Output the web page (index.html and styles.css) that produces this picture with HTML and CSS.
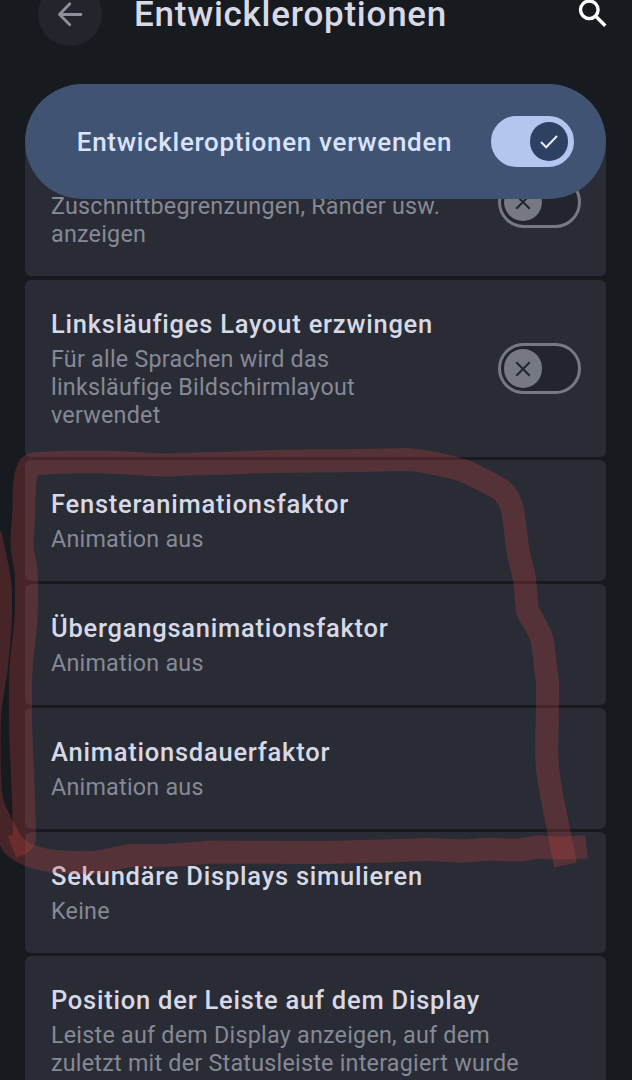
FILE: index.html
```
<!DOCTYPE html>
<html lang="de">
<head>
    <meta charset="UTF-8">
    <title>Entwickleroptionen</title>
    <meta name="viewport" content="width=device-width, initial-scale=1.0">
    <link rel="stylesheet" href="styles.css">
</head>
<body>
    <div class="screen">
        <header class="topbar">
            <button class="back" aria-label="Zurück">
                <svg width="28" height="28" viewBox="0 0 28 28">
                    <path d="M25 14.500H3.500M13.800 3.800L3.500 14.500l10.300 10.300"/>
                </svg>
            </button>
            <h1>Entwickleroptionen</h1>
            <svg class="search" width="30" height="30" viewBox="0 0 30 30">
                <circle cx="11.3" cy="10.8" r="8.8"/>
                <path d="M18 17.5l9.3 9.3"/>
            </svg>
        </header>

        <div class="main-switch">
            <span>Entwickleroptionen verwenden</span>
            <div class="toggle on">
                <div class="knob">
                    <svg width="20" height="20" viewBox="0 0 20 20"><path d="M2 10l5.2 5.2L18 4"/></svg>
                </div>
            </div>
        </div>

        <main class="list">
            <div class="card card-scrolled">
                <div class="text">
                    <p>Zuschnittbegrenzungen, Ränder usw.<br>anzeigen</p>
                </div>
                <div class="toggle">
                    <div class="knob">
                        <svg width="20" height="20" viewBox="0 0 20 20"><path d="M3.3 3.3l13.4 13.4M16.7 3.3L3.3 16.7"/></svg>
                    </div>
                </div>
            </div>
            <div class="card">
                <div class="text">
                    <h2>Linksläufiges Layout erzwingen</h2>
                    <p>Für alle Sprachen wird das<br>linksläufige Bildschirmlayout<br>verwendet</p>
                </div>
                <div class="toggle">
                    <div class="knob">
                        <svg width="20" height="20" viewBox="0 0 20 20"><path d="M3.3 3.3l13.4 13.4M16.7 3.3L3.3 16.7"/></svg>
                    </div>
                </div>
            </div>
            <div class="card">
                <div class="text">
                    <h2>Fensteranimationsfaktor</h2>
                    <p>Animation aus</p>
                </div>
            </div>
            <div class="card">
                <div class="text">
                    <h2>Übergangsanimationsfaktor</h2>
                    <p>Animation aus</p>
                </div>
            </div>
            <div class="card">
                <div class="text">
                    <h2>Animationsdauerfaktor</h2>
                    <p>Animation aus</p>
                </div>
            </div>
            <div class="card">
                <div class="text">
                    <h2>Sekundäre Displays simulieren</h2>
                    <p>Keine</p>
                </div>
            </div>
            <div class="card">
                <div class="text">
                    <h2>Position der Leiste auf dem Display</h2>
                    <p>Leiste auf dem Display anzeigen, auf dem<br>zuletzt mit der Statusleiste interagiert wurde</p>
                </div>
            </div>
        </main>

        <!-- Markierung mit dem Textmarker -->
        <svg class="marker" width="632" height="1080" viewBox="0 0 632 1080">
            <path d="M12 847C20 844 24.500 843 24.500 838C24 810 23 780 21 740C20 700 20 680 21.500 660C24 640 27 620 26.500 600V580C27 562 22 560 22 545C22 530 24 520 24 505C24 490 24 465 34 464C60 461 80 462 100 462C130 462 145 465 167 465C190 464 210 463 230 463C270 461 290 461 316 461C350 461 380 460 405 459.600C425 460 445 466 462 470C475 475 490 484 500 489C510 496 513 510 514 520C516 530 516 540 518 550C520 562 523 570 524.500 580C526 590 526 600 527.500 610C530 618 539 628 542 640C545 652 545 670 547.500 680V700C547.500 720 546.500 740 546.700 755C547 780 556 815 565.500 865"/>
            <path d="M586.500 846.700C570 848.500 553 848 538 847C530 848 525 850 516.700 850C507 850.500 500 849 490 849.300C480 849.500 473 851 463 851C450 851 440 849.500 427 849.500C415 849.500 408 850.500 400 850.500C370 851 340 852.500 316 852.500C280 852.500 250 852 213 852C195 853 180 855 165 855.500H133C115 857 105 862.500 90 862.500C70 863 60 862 50 861C35 858 20 853 13 845C5 830 -8 810 -9.500 793C-11 775 -11 765 -10.800 753C-11 735 -11 728 -10.500 713C-9 700 -6 685 -4 670C-2 650 0.500 630 0.500 615V590C-1 570 -7 550 -10 533"/>
        </svg>
    </div>
</body>
</html>
```
FILE: styles.css
```
:root {
    --bg-color: #171a1f;
    --card-color: #2a2c35;
    --banner-color: #415373;
    --title-color: #d7d9e6;
    --sub-color: #868996;
    --outline-color: #767982;
}

* {
    box-sizing: border-box;
}

body {
    margin: 0;
    background-color: var(--bg-color);
    color: var(--title-color);
    font-family: Roboto, "Liberation Sans", sans-serif;
}

.screen {
    position: relative;
    width: 632px;
    height: 1080px;
    overflow: hidden;
}

.topbar {
    display: flex;
    align-items: center;
    height: 64px;
    margin-top: -18px;
    padding: 0 24px 0 38px;
}

.back {
    display: flex;
    align-items: center;
    justify-content: center;
    width: 64px;
    height: 64px;
    padding: 0;
    border: none;
    border-radius: 50%;
    background-color: #22252b;
}

.back svg {
    fill: none;
    stroke: #8e909b;
    stroke-width: 2.800;
    stroke-linecap: round;
    stroke-linejoin: round;
}

h1 {
    flex: 1;
    margin: 0 0 0 32px;
    padding-top: 2px;
    font-size: 35px;
    font-weight: 500;
    letter-spacing: 0.750px;
    line-height: 28px;
}

.search {
    fill: none;
    stroke: #fff;
    stroke-width: 3.400;
}

.main-switch {
    position: relative;
    z-index: 1;
    display: flex;
    align-items: center;
    justify-content: space-between;
    height: 115px;
    margin: 38px 25.600px 0 25.300px;
    padding: 0 32px 0 51.500px;
    border-radius: 58px;
    background-color: var(--banner-color);
    color: #d9e3ff;
    font-size: 26px;
    font-weight: 500;
    letter-spacing: 0.700px;
}

.list {
    display: flex;
    flex-direction: column;
    gap: 3.300px;
    margin: -71.500px 25.600px 0 25.300px;
}

.card {
    display: flex;
    align-items: center;
    justify-content: space-between;
    flex-shrink: 0;
    padding: 28px 25.300px 27.500px 25.700px;
    border-radius: 6px;
    background-color: var(--card-color);
}

.card-scrolled {
    padding-top: 64px;
    padding-bottom: 28.500px;
    border-radius: 12px 12px 6px 6px;
}

.card-scrolled .toggle {
    margin-top: -35px;
}

h2 {
    margin: 0 0 5px;
    font-size: 25.500px;
    font-weight: 500;
    letter-spacing: 0.770px;
    line-height: 32px;
}

p {
    margin: 0;
    color: var(--sub-color);
    font-size: 23.300px;
    letter-spacing: 0.240px;
    line-height: 28.200px;
    white-space: nowrap;
}

.toggle {
    display: flex;
    align-items: center;
    flex-shrink: 0;
    width: 83.500px;
    height: 51.500px;
    padding: 0 3px;
    border: 3.500px solid var(--outline-color);
    border-radius: 26px;
    background-color: #22252d;
}

.toggle.on {
    justify-content: flex-end;
    border-color: #b4c6ef;
    background-color: #b4c6ef;
}

.knob {
    display: flex;
    align-items: center;
    justify-content: center;
    width: 38.500px;
    height: 38.500px;
    border-radius: 50%;
    background-color: var(--outline-color);
}

.knob svg {
    fill: none;
    stroke: #22252d;
    stroke-width: 2;
}

.on .knob {
    background-color: #2e4163;
}

.on .knob svg {
    stroke: #e4ebff;
}

.marker {
    position: absolute;
    top: 0;
    left: 0;
    z-index: 2;
    fill: none;
    stroke: rgba(214, 68, 65, 0.25);
    stroke-width: 23;
    pointer-events: none;
}
```
